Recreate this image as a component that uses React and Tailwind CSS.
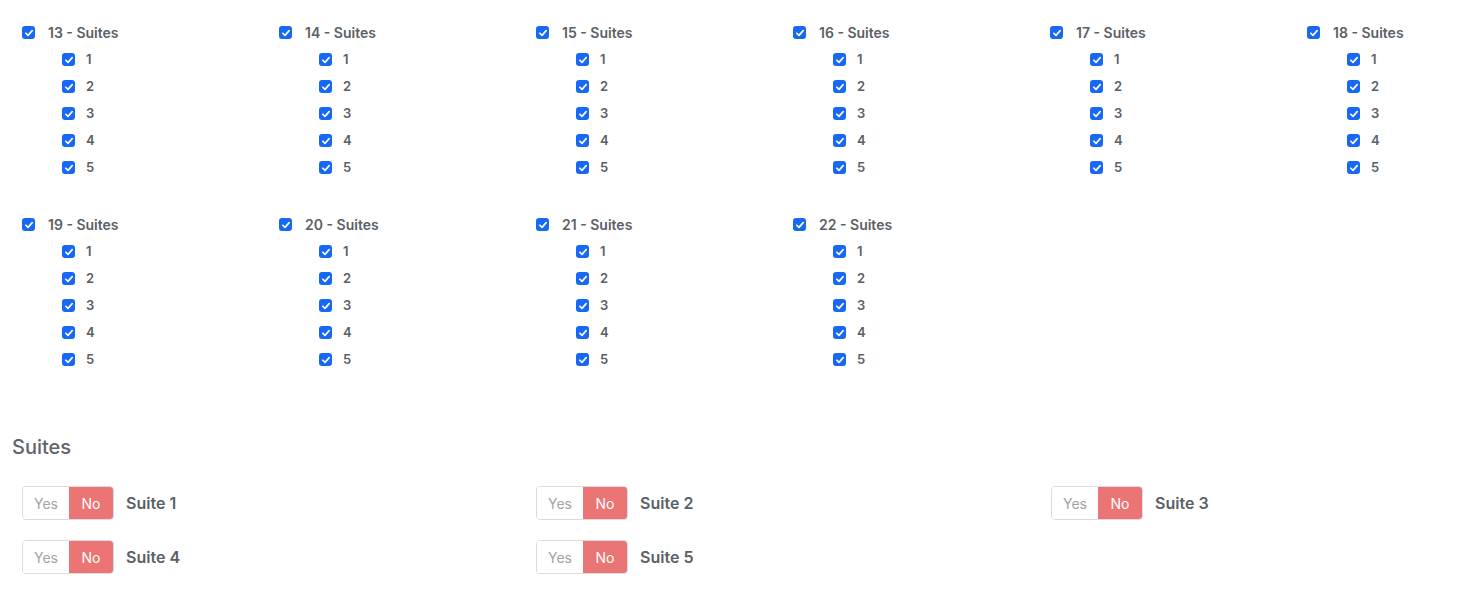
const FLOORS = [
  [13, 14, 15, 16, 17, 18],
  [19, 20, 21, 22],
];
const UNITS = [1, 2, 3, 4, 5];
const SUITES = [1, 2, 3, 4, 5];

function Check() {
  return (
    <span className="flex h-[13px] w-[13px] shrink-0 items-center justify-center rounded-[3px] bg-[#1769f5]">
      <svg viewBox="0 0 12 12" className="h-[10px] w-[10px]" fill="none">
        <path d="M2.2 6.3 L4.8 8.8 L9.8 3.2" stroke="white" strokeWidth="2" strokeLinecap="round" strokeLinejoin="round" />
      </svg>
    </span>
  );
}

function FloorGroup({ floor }) {
  return (
    <div className="w-[257px] shrink-0">
      <label className="flex h-[27px] items-center">
        <Check />
        <span className="ml-[13px] text-[14px] font-semibold text-[#5b5f66]">{floor} - Suites</span>
      </label>
      {UNITS.map((u) => (
        <label key={u} className="ml-[40px] flex h-[27px] items-center">
          <Check />
          <span className="ml-[11px] text-[13px] font-semibold text-[#5b5f66]">{u}</span>
        </label>
      ))}
    </div>
  );
}

function YesNo({ n }) {
  return (
    <div className="flex items-center">
      <div className="flex h-[34px] overflow-hidden rounded-[4px] border border-[#dcdcdc]">
        <span className="flex w-[46px] items-center justify-center bg-white text-[14px] text-[#a3a3a3]">Yes</span>
        <span className="flex w-[44px] items-center justify-center bg-[#eb7474] text-[14px] text-white">No</span>
      </div>
      <span className="ml-[12px] text-[16px] font-semibold text-[#5b5f66]">Suite {n}</span>
    </div>
  );
}

export default function App() {
  return (
    <div className="min-h-screen overflow-hidden bg-white font-['Inter',sans-serif]">
      <div className="pl-[22px] pt-[19px]">
        {FLOORS.map((row, i) => (
          <div key={i} className="mb-[30px] flex">
            {row.map((f) => (
              <FloorGroup key={f} floor={f} />
            ))}
          </div>
        ))}
      </div>

      {/* Suites */}
      <div className="px-[12px] pt-[29px]">
        <h2 className="text-[20px] font-medium text-[#60646b]">Suites</h2>
        <div className="mt-[24px] grid grid-cols-[514px_515px_1fr] gap-y-[20px] pl-[10px]">
          {SUITES.map((s) => (
            <YesNo key={s} n={s} />
          ))}
        </div>
      </div>
    </div>
  );
}
